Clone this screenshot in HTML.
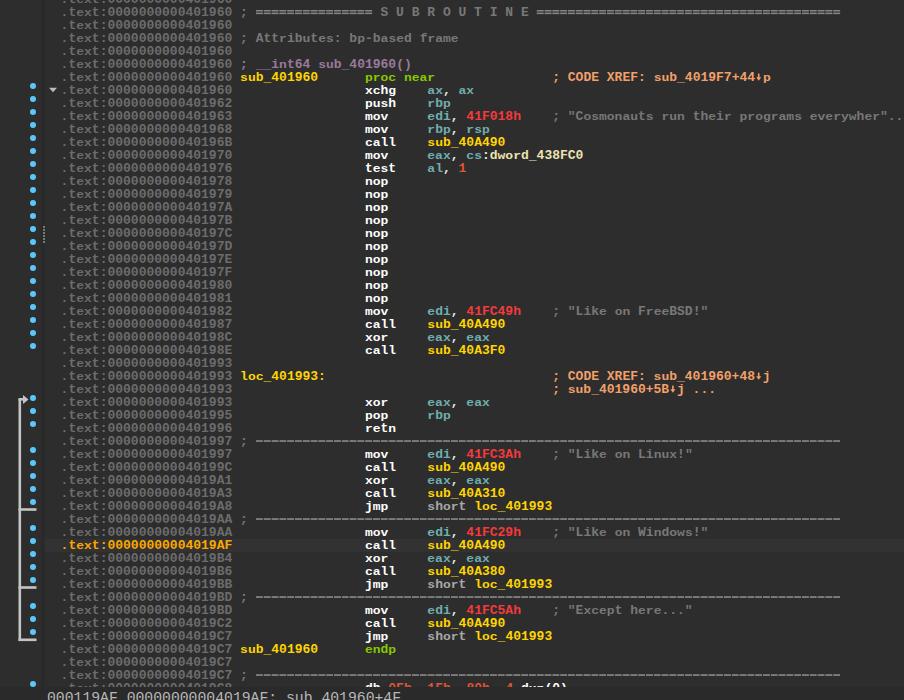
<!DOCTYPE html>
<html><head><meta charset="utf-8"><style>
html,body{margin:0;padding:0}
body{width:904px;height:700px;overflow:hidden;background:#2d2d2d;position:relative;font-family:"Liberation Mono",monospace}
.band{position:absolute;left:41px;top:0;width:4px;height:687px;background:#2a2a2a}
.code{position:absolute;left:60.6px;top:-7px;width:900px;font-size:13px;font-weight:bold;white-space:pre;color:#e8e8e8}
.l{height:13px;line-height:13px;position:relative}
.q{display:inline-block;transform:scaleY(0.86);transform-origin:0 10px;text-decoration:none}
.k{display:inline-block;transform:scaleY(0.94);transform-origin:0 10px;text-decoration:none}
.hlbar{position:absolute;left:45px;width:859px;top:539px;height:13px;background:#323232}
b{font-weight:bold}
.a{color:#6c6c6c}
.ah{color:#fca800}
.c{color:#787878}
.p{color:#9a7a9a}
.y{color:#ffd400}
.g{color:#88c800}
.x{color:#f2a06a}
.m{color:#ffffff}
.r{color:#70aeae}
.n{color:#f43a3c}
.o{color:#dd5533}
.d{color:#ece4b0}
.s{color:#a8a8a8}
.dot{position:absolute;left:29.6px;width:6.6px;height:6.6px;border-radius:50%;background:#5ac8fa}
.status{position:absolute;left:0;top:687px;width:904px;height:13px;background:#2a2a2a;overflow:hidden}
.status span{position:absolute;left:47px;top:0px;font-size:14.75px;line-height:22px;color:#b8b8b8;white-space:pre;font-family:"Liberation Mono",monospace}
svg{position:absolute;left:0;top:0}
</style></head>
<body>
<div class="band"></div>
<div class="hlbar"></div>
<svg width="60" height="700" viewBox="0 0 60 700">
<polygon points="49,87.8 57,87.8 53,92.2" fill="#bcbcbc"/>
<rect x="18.5" y="399" width="2.6" height="242" fill="#c4c4c4"/>
<rect x="18.5" y="398" width="5" height="2.6" fill="#c4c4c4"/>
<polygon points="23,395 28.5,399.5 23,404" fill="#c4c4c4"/>
<rect x="18.5" y="508.2" width="18" height="2.6" fill="#c4c4c4"/>
<rect x="18.5" y="586.2" width="18" height="2.6" fill="#c4c4c4"/>
<rect x="18.5" y="638.5" width="18" height="2.6" fill="#c4c4c4"/>
<g fill="#7a7a7a"><rect x="43" y="226" width="2" height="2"/><rect x="43" y="229" width="2" height="2"/><rect x="43" y="232" width="2" height="2"/><rect x="43" y="235" width="2" height="2"/><rect x="43" y="238" width="2" height="2"/><rect x="43" y="241" width="2" height="2"/></g>
</svg>
<i class="dot" style="top:82.6px"></i><i class="dot" style="top:95.6px"></i><i class="dot" style="top:108.6px"></i><i class="dot" style="top:121.6px"></i><i class="dot" style="top:134.6px"></i><i class="dot" style="top:147.6px"></i><i class="dot" style="top:160.6px"></i><i class="dot" style="top:173.6px"></i><i class="dot" style="top:186.6px"></i><i class="dot" style="top:199.6px"></i><i class="dot" style="top:212.6px"></i><i class="dot" style="top:225.6px"></i><i class="dot" style="top:238.6px"></i><i class="dot" style="top:251.6px"></i><i class="dot" style="top:264.6px"></i><i class="dot" style="top:277.6px"></i><i class="dot" style="top:290.6px"></i><i class="dot" style="top:303.6px"></i><i class="dot" style="top:316.6px"></i><i class="dot" style="top:329.6px"></i><i class="dot" style="top:342.6px"></i><i class="dot" style="top:394.6px"></i><i class="dot" style="top:407.6px"></i><i class="dot" style="top:420.6px"></i><i class="dot" style="top:446.6px"></i><i class="dot" style="top:459.6px"></i><i class="dot" style="top:472.6px"></i><i class="dot" style="top:485.6px"></i><i class="dot" style="top:498.6px"></i><i class="dot" style="top:524.6px"></i><i class="dot" style="top:537.6px"></i><i class="dot" style="top:550.6px"></i><i class="dot" style="top:563.6px"></i><i class="dot" style="top:576.6px"></i><i class="dot" style="top:602.6px"></i><i class="dot" style="top:615.6px"></i><i class="dot" style="top:628.6px"></i><i class="dot" style="top:680.6px"></i>
<svg class="dsh" width="904" height="700"><g fill="#f2a06a"><rect x="757.9" y="73.6" width="1.6" height="4.6"/><polygon points="756.2,77.2 761.2,77.2 758.7,80.8"/><rect x="757.9" y="372.6" width="1.6" height="4.6"/><polygon points="756.2,376.2 761.2,376.2 758.7,379.8"/><rect x="672.1" y="385.6" width="1.6" height="4.6"/><polygon points="670.4,389.2 675.4,389.2 672.9,392.8"/></g><g fill="#858585"><rect x="256.0" y="440.2" width="6.9" height="1.7"/><rect x="263.8" y="440.2" width="6.9" height="1.7"/><rect x="271.6" y="440.2" width="6.9" height="1.7"/><rect x="279.4" y="440.2" width="6.9" height="1.7"/><rect x="287.2" y="440.2" width="6.9" height="1.7"/><rect x="295.0" y="440.2" width="6.9" height="1.7"/><rect x="302.8" y="440.2" width="6.9" height="1.7"/><rect x="310.6" y="440.2" width="6.9" height="1.7"/><rect x="318.4" y="440.2" width="6.9" height="1.7"/><rect x="326.2" y="440.2" width="6.9" height="1.7"/><rect x="334.0" y="440.2" width="6.9" height="1.7"/><rect x="341.8" y="440.2" width="6.9" height="1.7"/><rect x="349.6" y="440.2" width="6.9" height="1.7"/><rect x="357.4" y="440.2" width="6.9" height="1.7"/><rect x="365.2" y="440.2" width="6.9" height="1.7"/><rect x="373.0" y="440.2" width="6.9" height="1.7"/><rect x="380.8" y="440.2" width="6.9" height="1.7"/><rect x="388.6" y="440.2" width="6.9" height="1.7"/><rect x="396.4" y="440.2" width="6.9" height="1.7"/><rect x="404.2" y="440.2" width="6.9" height="1.7"/><rect x="412.0" y="440.2" width="6.9" height="1.7"/><rect x="419.8" y="440.2" width="6.9" height="1.7"/><rect x="427.6" y="440.2" width="6.9" height="1.7"/><rect x="435.4" y="440.2" width="6.9" height="1.7"/><rect x="443.2" y="440.2" width="6.9" height="1.7"/><rect x="451.0" y="440.2" width="6.9" height="1.7"/><rect x="458.8" y="440.2" width="6.9" height="1.7"/><rect x="466.6" y="440.2" width="6.9" height="1.7"/><rect x="474.4" y="440.2" width="6.9" height="1.7"/><rect x="482.2" y="440.2" width="6.9" height="1.7"/><rect x="490.0" y="440.2" width="6.9" height="1.7"/><rect x="497.8" y="440.2" width="6.9" height="1.7"/><rect x="505.6" y="440.2" width="6.9" height="1.7"/><rect x="513.4" y="440.2" width="6.9" height="1.7"/><rect x="521.2" y="440.2" width="6.9" height="1.7"/><rect x="529.0" y="440.2" width="6.9" height="1.7"/><rect x="536.8" y="440.2" width="6.9" height="1.7"/><rect x="544.6" y="440.2" width="6.9" height="1.7"/><rect x="552.4" y="440.2" width="6.9" height="1.7"/><rect x="560.2" y="440.2" width="6.9" height="1.7"/><rect x="568.0" y="440.2" width="6.9" height="1.7"/><rect x="575.8" y="440.2" width="6.9" height="1.7"/><rect x="583.6" y="440.2" width="6.9" height="1.7"/><rect x="591.4" y="440.2" width="6.9" height="1.7"/><rect x="599.2" y="440.2" width="6.9" height="1.7"/><rect x="607.0" y="440.2" width="6.9" height="1.7"/><rect x="614.8" y="440.2" width="6.9" height="1.7"/><rect x="622.6" y="440.2" width="6.9" height="1.7"/><rect x="630.4" y="440.2" width="6.9" height="1.7"/><rect x="638.2" y="440.2" width="6.9" height="1.7"/><rect x="646.0" y="440.2" width="6.9" height="1.7"/><rect x="653.8" y="440.2" width="6.9" height="1.7"/><rect x="661.6" y="440.2" width="6.9" height="1.7"/><rect x="669.4" y="440.2" width="6.9" height="1.7"/><rect x="677.2" y="440.2" width="6.9" height="1.7"/><rect x="685.0" y="440.2" width="6.9" height="1.7"/><rect x="692.8" y="440.2" width="6.9" height="1.7"/><rect x="700.6" y="440.2" width="6.9" height="1.7"/><rect x="708.4" y="440.2" width="6.9" height="1.7"/><rect x="716.2" y="440.2" width="6.9" height="1.7"/><rect x="724.0" y="440.2" width="6.9" height="1.7"/><rect x="731.8" y="440.2" width="6.9" height="1.7"/><rect x="739.6" y="440.2" width="6.9" height="1.7"/><rect x="747.4" y="440.2" width="6.9" height="1.7"/><rect x="755.2" y="440.2" width="6.9" height="1.7"/><rect x="763.0" y="440.2" width="6.9" height="1.7"/><rect x="770.8" y="440.2" width="6.9" height="1.7"/><rect x="778.6" y="440.2" width="6.9" height="1.7"/><rect x="786.4" y="440.2" width="6.9" height="1.7"/><rect x="794.2" y="440.2" width="6.9" height="1.7"/><rect x="802.0" y="440.2" width="6.9" height="1.7"/><rect x="809.8" y="440.2" width="6.9" height="1.7"/><rect x="817.6" y="440.2" width="6.9" height="1.7"/><rect x="825.4" y="440.2" width="6.9" height="1.7"/><rect x="833.2" y="440.2" width="6.9" height="1.7"/><rect x="256.0" y="518.2" width="6.9" height="1.7"/><rect x="263.8" y="518.2" width="6.9" height="1.7"/><rect x="271.6" y="518.2" width="6.9" height="1.7"/><rect x="279.4" y="518.2" width="6.9" height="1.7"/><rect x="287.2" y="518.2" width="6.9" height="1.7"/><rect x="295.0" y="518.2" width="6.9" height="1.7"/><rect x="302.8" y="518.2" width="6.9" height="1.7"/><rect x="310.6" y="518.2" width="6.9" height="1.7"/><rect x="318.4" y="518.2" width="6.9" height="1.7"/><rect x="326.2" y="518.2" width="6.9" height="1.7"/><rect x="334.0" y="518.2" width="6.9" height="1.7"/><rect x="341.8" y="518.2" width="6.9" height="1.7"/><rect x="349.6" y="518.2" width="6.9" height="1.7"/><rect x="357.4" y="518.2" width="6.9" height="1.7"/><rect x="365.2" y="518.2" width="6.9" height="1.7"/><rect x="373.0" y="518.2" width="6.9" height="1.7"/><rect x="380.8" y="518.2" width="6.9" height="1.7"/><rect x="388.6" y="518.2" width="6.9" height="1.7"/><rect x="396.4" y="518.2" width="6.9" height="1.7"/><rect x="404.2" y="518.2" width="6.9" height="1.7"/><rect x="412.0" y="518.2" width="6.9" height="1.7"/><rect x="419.8" y="518.2" width="6.9" height="1.7"/><rect x="427.6" y="518.2" width="6.9" height="1.7"/><rect x="435.4" y="518.2" width="6.9" height="1.7"/><rect x="443.2" y="518.2" width="6.9" height="1.7"/><rect x="451.0" y="518.2" width="6.9" height="1.7"/><rect x="458.8" y="518.2" width="6.9" height="1.7"/><rect x="466.6" y="518.2" width="6.9" height="1.7"/><rect x="474.4" y="518.2" width="6.9" height="1.7"/><rect x="482.2" y="518.2" width="6.9" height="1.7"/><rect x="490.0" y="518.2" width="6.9" height="1.7"/><rect x="497.8" y="518.2" width="6.9" height="1.7"/><rect x="505.6" y="518.2" width="6.9" height="1.7"/><rect x="513.4" y="518.2" width="6.9" height="1.7"/><rect x="521.2" y="518.2" width="6.9" height="1.7"/><rect x="529.0" y="518.2" width="6.9" height="1.7"/><rect x="536.8" y="518.2" width="6.9" height="1.7"/><rect x="544.6" y="518.2" width="6.9" height="1.7"/><rect x="552.4" y="518.2" width="6.9" height="1.7"/><rect x="560.2" y="518.2" width="6.9" height="1.7"/><rect x="568.0" y="518.2" width="6.9" height="1.7"/><rect x="575.8" y="518.2" width="6.9" height="1.7"/><rect x="583.6" y="518.2" width="6.9" height="1.7"/><rect x="591.4" y="518.2" width="6.9" height="1.7"/><rect x="599.2" y="518.2" width="6.9" height="1.7"/><rect x="607.0" y="518.2" width="6.9" height="1.7"/><rect x="614.8" y="518.2" width="6.9" height="1.7"/><rect x="622.6" y="518.2" width="6.9" height="1.7"/><rect x="630.4" y="518.2" width="6.9" height="1.7"/><rect x="638.2" y="518.2" width="6.9" height="1.7"/><rect x="646.0" y="518.2" width="6.9" height="1.7"/><rect x="653.8" y="518.2" width="6.9" height="1.7"/><rect x="661.6" y="518.2" width="6.9" height="1.7"/><rect x="669.4" y="518.2" width="6.9" height="1.7"/><rect x="677.2" y="518.2" width="6.9" height="1.7"/><rect x="685.0" y="518.2" width="6.9" height="1.7"/><rect x="692.8" y="518.2" width="6.9" height="1.7"/><rect x="700.6" y="518.2" width="6.9" height="1.7"/><rect x="708.4" y="518.2" width="6.9" height="1.7"/><rect x="716.2" y="518.2" width="6.9" height="1.7"/><rect x="724.0" y="518.2" width="6.9" height="1.7"/><rect x="731.8" y="518.2" width="6.9" height="1.7"/><rect x="739.6" y="518.2" width="6.9" height="1.7"/><rect x="747.4" y="518.2" width="6.9" height="1.7"/><rect x="755.2" y="518.2" width="6.9" height="1.7"/><rect x="763.0" y="518.2" width="6.9" height="1.7"/><rect x="770.8" y="518.2" width="6.9" height="1.7"/><rect x="778.6" y="518.2" width="6.9" height="1.7"/><rect x="786.4" y="518.2" width="6.9" height="1.7"/><rect x="794.2" y="518.2" width="6.9" height="1.7"/><rect x="802.0" y="518.2" width="6.9" height="1.7"/><rect x="809.8" y="518.2" width="6.9" height="1.7"/><rect x="817.6" y="518.2" width="6.9" height="1.7"/><rect x="825.4" y="518.2" width="6.9" height="1.7"/><rect x="833.2" y="518.2" width="6.9" height="1.7"/><rect x="256.0" y="596.2" width="6.9" height="1.7"/><rect x="263.8" y="596.2" width="6.9" height="1.7"/><rect x="271.6" y="596.2" width="6.9" height="1.7"/><rect x="279.4" y="596.2" width="6.9" height="1.7"/><rect x="287.2" y="596.2" width="6.9" height="1.7"/><rect x="295.0" y="596.2" width="6.9" height="1.7"/><rect x="302.8" y="596.2" width="6.9" height="1.7"/><rect x="310.6" y="596.2" width="6.9" height="1.7"/><rect x="318.4" y="596.2" width="6.9" height="1.7"/><rect x="326.2" y="596.2" width="6.9" height="1.7"/><rect x="334.0" y="596.2" width="6.9" height="1.7"/><rect x="341.8" y="596.2" width="6.9" height="1.7"/><rect x="349.6" y="596.2" width="6.9" height="1.7"/><rect x="357.4" y="596.2" width="6.9" height="1.7"/><rect x="365.2" y="596.2" width="6.9" height="1.7"/><rect x="373.0" y="596.2" width="6.9" height="1.7"/><rect x="380.8" y="596.2" width="6.9" height="1.7"/><rect x="388.6" y="596.2" width="6.9" height="1.7"/><rect x="396.4" y="596.2" width="6.9" height="1.7"/><rect x="404.2" y="596.2" width="6.9" height="1.7"/><rect x="412.0" y="596.2" width="6.9" height="1.7"/><rect x="419.8" y="596.2" width="6.9" height="1.7"/><rect x="427.6" y="596.2" width="6.9" height="1.7"/><rect x="435.4" y="596.2" width="6.9" height="1.7"/><rect x="443.2" y="596.2" width="6.9" height="1.7"/><rect x="451.0" y="596.2" width="6.9" height="1.7"/><rect x="458.8" y="596.2" width="6.9" height="1.7"/><rect x="466.6" y="596.2" width="6.9" height="1.7"/><rect x="474.4" y="596.2" width="6.9" height="1.7"/><rect x="482.2" y="596.2" width="6.9" height="1.7"/><rect x="490.0" y="596.2" width="6.9" height="1.7"/><rect x="497.8" y="596.2" width="6.9" height="1.7"/><rect x="505.6" y="596.2" width="6.9" height="1.7"/><rect x="513.4" y="596.2" width="6.9" height="1.7"/><rect x="521.2" y="596.2" width="6.9" height="1.7"/><rect x="529.0" y="596.2" width="6.9" height="1.7"/><rect x="536.8" y="596.2" width="6.9" height="1.7"/><rect x="544.6" y="596.2" width="6.9" height="1.7"/><rect x="552.4" y="596.2" width="6.9" height="1.7"/><rect x="560.2" y="596.2" width="6.9" height="1.7"/><rect x="568.0" y="596.2" width="6.9" height="1.7"/><rect x="575.8" y="596.2" width="6.9" height="1.7"/><rect x="583.6" y="596.2" width="6.9" height="1.7"/><rect x="591.4" y="596.2" width="6.9" height="1.7"/><rect x="599.2" y="596.2" width="6.9" height="1.7"/><rect x="607.0" y="596.2" width="6.9" height="1.7"/><rect x="614.8" y="596.2" width="6.9" height="1.7"/><rect x="622.6" y="596.2" width="6.9" height="1.7"/><rect x="630.4" y="596.2" width="6.9" height="1.7"/><rect x="638.2" y="596.2" width="6.9" height="1.7"/><rect x="646.0" y="596.2" width="6.9" height="1.7"/><rect x="653.8" y="596.2" width="6.9" height="1.7"/><rect x="661.6" y="596.2" width="6.9" height="1.7"/><rect x="669.4" y="596.2" width="6.9" height="1.7"/><rect x="677.2" y="596.2" width="6.9" height="1.7"/><rect x="685.0" y="596.2" width="6.9" height="1.7"/><rect x="692.8" y="596.2" width="6.9" height="1.7"/><rect x="700.6" y="596.2" width="6.9" height="1.7"/><rect x="708.4" y="596.2" width="6.9" height="1.7"/><rect x="716.2" y="596.2" width="6.9" height="1.7"/><rect x="724.0" y="596.2" width="6.9" height="1.7"/><rect x="731.8" y="596.2" width="6.9" height="1.7"/><rect x="739.6" y="596.2" width="6.9" height="1.7"/><rect x="747.4" y="596.2" width="6.9" height="1.7"/><rect x="755.2" y="596.2" width="6.9" height="1.7"/><rect x="763.0" y="596.2" width="6.9" height="1.7"/><rect x="770.8" y="596.2" width="6.9" height="1.7"/><rect x="778.6" y="596.2" width="6.9" height="1.7"/><rect x="786.4" y="596.2" width="6.9" height="1.7"/><rect x="794.2" y="596.2" width="6.9" height="1.7"/><rect x="802.0" y="596.2" width="6.9" height="1.7"/><rect x="809.8" y="596.2" width="6.9" height="1.7"/><rect x="817.6" y="596.2" width="6.9" height="1.7"/><rect x="825.4" y="596.2" width="6.9" height="1.7"/><rect x="833.2" y="596.2" width="6.9" height="1.7"/><rect x="256.0" y="674.2" width="6.9" height="1.7"/><rect x="263.8" y="674.2" width="6.9" height="1.7"/><rect x="271.6" y="674.2" width="6.9" height="1.7"/><rect x="279.4" y="674.2" width="6.9" height="1.7"/><rect x="287.2" y="674.2" width="6.9" height="1.7"/><rect x="295.0" y="674.2" width="6.9" height="1.7"/><rect x="302.8" y="674.2" width="6.9" height="1.7"/><rect x="310.6" y="674.2" width="6.9" height="1.7"/><rect x="318.4" y="674.2" width="6.9" height="1.7"/><rect x="326.2" y="674.2" width="6.9" height="1.7"/><rect x="334.0" y="674.2" width="6.9" height="1.7"/><rect x="341.8" y="674.2" width="6.9" height="1.7"/><rect x="349.6" y="674.2" width="6.9" height="1.7"/><rect x="357.4" y="674.2" width="6.9" height="1.7"/><rect x="365.2" y="674.2" width="6.9" height="1.7"/><rect x="373.0" y="674.2" width="6.9" height="1.7"/><rect x="380.8" y="674.2" width="6.9" height="1.7"/><rect x="388.6" y="674.2" width="6.9" height="1.7"/><rect x="396.4" y="674.2" width="6.9" height="1.7"/><rect x="404.2" y="674.2" width="6.9" height="1.7"/><rect x="412.0" y="674.2" width="6.9" height="1.7"/><rect x="419.8" y="674.2" width="6.9" height="1.7"/><rect x="427.6" y="674.2" width="6.9" height="1.7"/><rect x="435.4" y="674.2" width="6.9" height="1.7"/><rect x="443.2" y="674.2" width="6.9" height="1.7"/><rect x="451.0" y="674.2" width="6.9" height="1.7"/><rect x="458.8" y="674.2" width="6.9" height="1.7"/><rect x="466.6" y="674.2" width="6.9" height="1.7"/><rect x="474.4" y="674.2" width="6.9" height="1.7"/><rect x="482.2" y="674.2" width="6.9" height="1.7"/><rect x="490.0" y="674.2" width="6.9" height="1.7"/><rect x="497.8" y="674.2" width="6.9" height="1.7"/><rect x="505.6" y="674.2" width="6.9" height="1.7"/><rect x="513.4" y="674.2" width="6.9" height="1.7"/><rect x="521.2" y="674.2" width="6.9" height="1.7"/><rect x="529.0" y="674.2" width="6.9" height="1.7"/><rect x="536.8" y="674.2" width="6.9" height="1.7"/><rect x="544.6" y="674.2" width="6.9" height="1.7"/><rect x="552.4" y="674.2" width="6.9" height="1.7"/><rect x="560.2" y="674.2" width="6.9" height="1.7"/><rect x="568.0" y="674.2" width="6.9" height="1.7"/><rect x="575.8" y="674.2" width="6.9" height="1.7"/><rect x="583.6" y="674.2" width="6.9" height="1.7"/><rect x="591.4" y="674.2" width="6.9" height="1.7"/><rect x="599.2" y="674.2" width="6.9" height="1.7"/><rect x="607.0" y="674.2" width="6.9" height="1.7"/><rect x="614.8" y="674.2" width="6.9" height="1.7"/><rect x="622.6" y="674.2" width="6.9" height="1.7"/><rect x="630.4" y="674.2" width="6.9" height="1.7"/><rect x="638.2" y="674.2" width="6.9" height="1.7"/><rect x="646.0" y="674.2" width="6.9" height="1.7"/><rect x="653.8" y="674.2" width="6.9" height="1.7"/><rect x="661.6" y="674.2" width="6.9" height="1.7"/><rect x="669.4" y="674.2" width="6.9" height="1.7"/><rect x="677.2" y="674.2" width="6.9" height="1.7"/><rect x="685.0" y="674.2" width="6.9" height="1.7"/><rect x="692.8" y="674.2" width="6.9" height="1.7"/><rect x="700.6" y="674.2" width="6.9" height="1.7"/><rect x="708.4" y="674.2" width="6.9" height="1.7"/><rect x="716.2" y="674.2" width="6.9" height="1.7"/><rect x="724.0" y="674.2" width="6.9" height="1.7"/><rect x="731.8" y="674.2" width="6.9" height="1.7"/><rect x="739.6" y="674.2" width="6.9" height="1.7"/><rect x="747.4" y="674.2" width="6.9" height="1.7"/><rect x="755.2" y="674.2" width="6.9" height="1.7"/><rect x="763.0" y="674.2" width="6.9" height="1.7"/><rect x="770.8" y="674.2" width="6.9" height="1.7"/><rect x="778.6" y="674.2" width="6.9" height="1.7"/><rect x="786.4" y="674.2" width="6.9" height="1.7"/><rect x="794.2" y="674.2" width="6.9" height="1.7"/><rect x="802.0" y="674.2" width="6.9" height="1.7"/><rect x="809.8" y="674.2" width="6.9" height="1.7"/><rect x="817.6" y="674.2" width="6.9" height="1.7"/><rect x="825.4" y="674.2" width="6.9" height="1.7"/><rect x="833.2" y="674.2" width="6.9" height="1.7"/></g><g fill="#858585"><rect x="256.0" y="10.0" width="6.9" height="4.1" fill="#4e4e4e"/><rect x="256.0" y="10.0" width="6.9" height="1.2"/><rect x="256.0" y="12.9" width="6.9" height="1.2"/><rect x="263.8" y="10.0" width="6.9" height="4.1" fill="#4e4e4e"/><rect x="263.8" y="10.0" width="6.9" height="1.2"/><rect x="263.8" y="12.9" width="6.9" height="1.2"/><rect x="271.6" y="10.0" width="6.9" height="4.1" fill="#4e4e4e"/><rect x="271.6" y="10.0" width="6.9" height="1.2"/><rect x="271.6" y="12.9" width="6.9" height="1.2"/><rect x="279.4" y="10.0" width="6.9" height="4.1" fill="#4e4e4e"/><rect x="279.4" y="10.0" width="6.9" height="1.2"/><rect x="279.4" y="12.9" width="6.9" height="1.2"/><rect x="287.2" y="10.0" width="6.9" height="4.1" fill="#4e4e4e"/><rect x="287.2" y="10.0" width="6.9" height="1.2"/><rect x="287.2" y="12.9" width="6.9" height="1.2"/><rect x="295.0" y="10.0" width="6.9" height="4.1" fill="#4e4e4e"/><rect x="295.0" y="10.0" width="6.9" height="1.2"/><rect x="295.0" y="12.9" width="6.9" height="1.2"/><rect x="302.8" y="10.0" width="6.9" height="4.1" fill="#4e4e4e"/><rect x="302.8" y="10.0" width="6.9" height="1.2"/><rect x="302.8" y="12.9" width="6.9" height="1.2"/><rect x="310.6" y="10.0" width="6.9" height="4.1" fill="#4e4e4e"/><rect x="310.6" y="10.0" width="6.9" height="1.2"/><rect x="310.6" y="12.9" width="6.9" height="1.2"/><rect x="318.4" y="10.0" width="6.9" height="4.1" fill="#4e4e4e"/><rect x="318.4" y="10.0" width="6.9" height="1.2"/><rect x="318.4" y="12.9" width="6.9" height="1.2"/><rect x="326.2" y="10.0" width="6.9" height="4.1" fill="#4e4e4e"/><rect x="326.2" y="10.0" width="6.9" height="1.2"/><rect x="326.2" y="12.9" width="6.9" height="1.2"/><rect x="334.0" y="10.0" width="6.9" height="4.1" fill="#4e4e4e"/><rect x="334.0" y="10.0" width="6.9" height="1.2"/><rect x="334.0" y="12.9" width="6.9" height="1.2"/><rect x="341.8" y="10.0" width="6.9" height="4.1" fill="#4e4e4e"/><rect x="341.8" y="10.0" width="6.9" height="1.2"/><rect x="341.8" y="12.9" width="6.9" height="1.2"/><rect x="349.6" y="10.0" width="6.9" height="4.1" fill="#4e4e4e"/><rect x="349.6" y="10.0" width="6.9" height="1.2"/><rect x="349.6" y="12.9" width="6.9" height="1.2"/><rect x="357.4" y="10.0" width="6.9" height="4.1" fill="#4e4e4e"/><rect x="357.4" y="10.0" width="6.9" height="1.2"/><rect x="357.4" y="12.9" width="6.9" height="1.2"/><rect x="365.2" y="10.0" width="6.9" height="4.1" fill="#4e4e4e"/><rect x="365.2" y="10.0" width="6.9" height="1.2"/><rect x="365.2" y="12.9" width="6.9" height="1.2"/><rect x="536.8" y="10.0" width="6.9" height="4.1" fill="#4e4e4e"/><rect x="536.8" y="10.0" width="6.9" height="1.2"/><rect x="536.8" y="12.9" width="6.9" height="1.2"/><rect x="544.6" y="10.0" width="6.9" height="4.1" fill="#4e4e4e"/><rect x="544.6" y="10.0" width="6.9" height="1.2"/><rect x="544.6" y="12.9" width="6.9" height="1.2"/><rect x="552.4" y="10.0" width="6.9" height="4.1" fill="#4e4e4e"/><rect x="552.4" y="10.0" width="6.9" height="1.2"/><rect x="552.4" y="12.9" width="6.9" height="1.2"/><rect x="560.2" y="10.0" width="6.9" height="4.1" fill="#4e4e4e"/><rect x="560.2" y="10.0" width="6.9" height="1.2"/><rect x="560.2" y="12.9" width="6.9" height="1.2"/><rect x="568.0" y="10.0" width="6.9" height="4.1" fill="#4e4e4e"/><rect x="568.0" y="10.0" width="6.9" height="1.2"/><rect x="568.0" y="12.9" width="6.9" height="1.2"/><rect x="575.8" y="10.0" width="6.9" height="4.1" fill="#4e4e4e"/><rect x="575.8" y="10.0" width="6.9" height="1.2"/><rect x="575.8" y="12.9" width="6.9" height="1.2"/><rect x="583.6" y="10.0" width="6.9" height="4.1" fill="#4e4e4e"/><rect x="583.6" y="10.0" width="6.9" height="1.2"/><rect x="583.6" y="12.9" width="6.9" height="1.2"/><rect x="591.4" y="10.0" width="6.9" height="4.1" fill="#4e4e4e"/><rect x="591.4" y="10.0" width="6.9" height="1.2"/><rect x="591.4" y="12.9" width="6.9" height="1.2"/><rect x="599.2" y="10.0" width="6.9" height="4.1" fill="#4e4e4e"/><rect x="599.2" y="10.0" width="6.9" height="1.2"/><rect x="599.2" y="12.9" width="6.9" height="1.2"/><rect x="607.0" y="10.0" width="6.9" height="4.1" fill="#4e4e4e"/><rect x="607.0" y="10.0" width="6.9" height="1.2"/><rect x="607.0" y="12.9" width="6.9" height="1.2"/><rect x="614.8" y="10.0" width="6.9" height="4.1" fill="#4e4e4e"/><rect x="614.8" y="10.0" width="6.9" height="1.2"/><rect x="614.8" y="12.9" width="6.9" height="1.2"/><rect x="622.6" y="10.0" width="6.9" height="4.1" fill="#4e4e4e"/><rect x="622.6" y="10.0" width="6.9" height="1.2"/><rect x="622.6" y="12.9" width="6.9" height="1.2"/><rect x="630.4" y="10.0" width="6.9" height="4.1" fill="#4e4e4e"/><rect x="630.4" y="10.0" width="6.9" height="1.2"/><rect x="630.4" y="12.9" width="6.9" height="1.2"/><rect x="638.2" y="10.0" width="6.9" height="4.1" fill="#4e4e4e"/><rect x="638.2" y="10.0" width="6.9" height="1.2"/><rect x="638.2" y="12.9" width="6.9" height="1.2"/><rect x="646.0" y="10.0" width="6.9" height="4.1" fill="#4e4e4e"/><rect x="646.0" y="10.0" width="6.9" height="1.2"/><rect x="646.0" y="12.9" width="6.9" height="1.2"/><rect x="653.8" y="10.0" width="6.9" height="4.1" fill="#4e4e4e"/><rect x="653.8" y="10.0" width="6.9" height="1.2"/><rect x="653.8" y="12.9" width="6.9" height="1.2"/><rect x="661.6" y="10.0" width="6.9" height="4.1" fill="#4e4e4e"/><rect x="661.6" y="10.0" width="6.9" height="1.2"/><rect x="661.6" y="12.9" width="6.9" height="1.2"/><rect x="669.4" y="10.0" width="6.9" height="4.1" fill="#4e4e4e"/><rect x="669.4" y="10.0" width="6.9" height="1.2"/><rect x="669.4" y="12.9" width="6.9" height="1.2"/><rect x="677.2" y="10.0" width="6.9" height="4.1" fill="#4e4e4e"/><rect x="677.2" y="10.0" width="6.9" height="1.2"/><rect x="677.2" y="12.9" width="6.9" height="1.2"/><rect x="685.0" y="10.0" width="6.9" height="4.1" fill="#4e4e4e"/><rect x="685.0" y="10.0" width="6.9" height="1.2"/><rect x="685.0" y="12.9" width="6.9" height="1.2"/><rect x="692.8" y="10.0" width="6.9" height="4.1" fill="#4e4e4e"/><rect x="692.8" y="10.0" width="6.9" height="1.2"/><rect x="692.8" y="12.9" width="6.9" height="1.2"/><rect x="700.6" y="10.0" width="6.9" height="4.1" fill="#4e4e4e"/><rect x="700.6" y="10.0" width="6.9" height="1.2"/><rect x="700.6" y="12.9" width="6.9" height="1.2"/><rect x="708.4" y="10.0" width="6.9" height="4.1" fill="#4e4e4e"/><rect x="708.4" y="10.0" width="6.9" height="1.2"/><rect x="708.4" y="12.9" width="6.9" height="1.2"/><rect x="716.2" y="10.0" width="6.9" height="4.1" fill="#4e4e4e"/><rect x="716.2" y="10.0" width="6.9" height="1.2"/><rect x="716.2" y="12.9" width="6.9" height="1.2"/><rect x="724.0" y="10.0" width="6.9" height="4.1" fill="#4e4e4e"/><rect x="724.0" y="10.0" width="6.9" height="1.2"/><rect x="724.0" y="12.9" width="6.9" height="1.2"/><rect x="731.8" y="10.0" width="6.9" height="4.1" fill="#4e4e4e"/><rect x="731.8" y="10.0" width="6.9" height="1.2"/><rect x="731.8" y="12.9" width="6.9" height="1.2"/><rect x="739.6" y="10.0" width="6.9" height="4.1" fill="#4e4e4e"/><rect x="739.6" y="10.0" width="6.9" height="1.2"/><rect x="739.6" y="12.9" width="6.9" height="1.2"/><rect x="747.4" y="10.0" width="6.9" height="4.1" fill="#4e4e4e"/><rect x="747.4" y="10.0" width="6.9" height="1.2"/><rect x="747.4" y="12.9" width="6.9" height="1.2"/><rect x="755.2" y="10.0" width="6.9" height="4.1" fill="#4e4e4e"/><rect x="755.2" y="10.0" width="6.9" height="1.2"/><rect x="755.2" y="12.9" width="6.9" height="1.2"/><rect x="763.0" y="10.0" width="6.9" height="4.1" fill="#4e4e4e"/><rect x="763.0" y="10.0" width="6.9" height="1.2"/><rect x="763.0" y="12.9" width="6.9" height="1.2"/><rect x="770.8" y="10.0" width="6.9" height="4.1" fill="#4e4e4e"/><rect x="770.8" y="10.0" width="6.9" height="1.2"/><rect x="770.8" y="12.9" width="6.9" height="1.2"/><rect x="778.6" y="10.0" width="6.9" height="4.1" fill="#4e4e4e"/><rect x="778.6" y="10.0" width="6.9" height="1.2"/><rect x="778.6" y="12.9" width="6.9" height="1.2"/><rect x="786.4" y="10.0" width="6.9" height="4.1" fill="#4e4e4e"/><rect x="786.4" y="10.0" width="6.9" height="1.2"/><rect x="786.4" y="12.9" width="6.9" height="1.2"/><rect x="794.2" y="10.0" width="6.9" height="4.1" fill="#4e4e4e"/><rect x="794.2" y="10.0" width="6.9" height="1.2"/><rect x="794.2" y="12.9" width="6.9" height="1.2"/><rect x="802.0" y="10.0" width="6.9" height="4.1" fill="#4e4e4e"/><rect x="802.0" y="10.0" width="6.9" height="1.2"/><rect x="802.0" y="12.9" width="6.9" height="1.2"/><rect x="809.8" y="10.0" width="6.9" height="4.1" fill="#4e4e4e"/><rect x="809.8" y="10.0" width="6.9" height="1.2"/><rect x="809.8" y="12.9" width="6.9" height="1.2"/><rect x="817.6" y="10.0" width="6.9" height="4.1" fill="#4e4e4e"/><rect x="817.6" y="10.0" width="6.9" height="1.2"/><rect x="817.6" y="12.9" width="6.9" height="1.2"/><rect x="825.4" y="10.0" width="6.9" height="4.1" fill="#4e4e4e"/><rect x="825.4" y="10.0" width="6.9" height="1.2"/><rect x="825.4" y="12.9" width="6.9" height="1.2"/><rect x="833.2" y="10.0" width="6.9" height="4.1" fill="#4e4e4e"/><rect x="833.2" y="10.0" width="6.9" height="1.2"/><rect x="833.2" y="12.9" width="6.9" height="1.2"/></g></svg>
<div class="code"><div class="l"><b class="a">.<u class="k">t</u><u class="q">ex</u><u class="k">t</u>:0000000000401960</b></div><div class="l"><b class="a">.<u class="k">t</u><u class="q">ex</u><u class="k">t</u>:0000000000401960</b><b class="c"> ;                 S U B R O U T I N E                                        </b></div><div class="l"><b class="a">.<u class="k">t</u><u class="q">ex</u><u class="k">t</u>:0000000000401960</b></div><div class="l"><b class="a">.<u class="k">t</u><u class="q">ex</u><u class="k">t</u>:0000000000401960</b><b class="c"> ; A<u class="k">tt</u><u class="q">r</u><u class="k">ib</u><u class="q">u</u><u class="k">t</u><u class="q">es</u>: <u class="k">b</u><u class="q">p</u>-<u class="k">b</u><u class="q">ase</u><u class="k">d</u> <u class="k">f</u><u class="q">rame</u></b></div><div class="l"><b class="a">.<u class="k">t</u><u class="q">ex</u><u class="k">t</u>:0000000000401960</b></div><div class="l"><b class="a">.<u class="k">t</u><u class="q">ex</u><u class="k">t</u>:0000000000401960</b><b class="p"> ; __<u class="k">i</u><u class="q">n</u><u class="k">t</u>64 <u class="q">su</u><u class="k">b</u>_401960()</b></div><div class="l"><b class="a">.<u class="k">t</u><u class="q">ex</u><u class="k">t</u>:0000000000401960</b> <b class="y"><u class="q">su</u><u class="k">b</u>_401960</b>      <b class="g"><u class="q">proc</u> <u class="q">near</u></b>               <b class="x">; CODE XREF: <u class="q">su</u><u class="k">b</u>_4019F7+44 <u class="q">p</u></b></div><div class="l"><b class="a">.<u class="k">t</u><u class="q">ex</u><u class="k">t</u>:0000000000401960</b>                 <b class="m"><u class="q">xc</u><u class="k">h</u><u class="q">g</u></b>    <b class="r"><u class="q">ax</u></b>, <b class="r"><u class="q">ax</u></b></div><div class="l"><b class="a">.<u class="k">t</u><u class="q">ex</u><u class="k">t</u>:0000000000401962</b>                 <b class="m"><u class="q">pus</u><u class="k">h</u></b>    <b class="r"><u class="q">r</u><u class="k">b</u><u class="q">p</u></b></div><div class="l"><b class="a">.<u class="k">t</u><u class="q">ex</u><u class="k">t</u>:0000000000401963</b>                 <b class="m"><u class="q">mov</u></b>     <b class="r"><u class="q">e</u><u class="k">di</u></b>, <b class="n">41F018<u class="k">h</u></b>    <b class="c">; "C<u class="q">osmonau</u><u class="k">t</u><u class="q">s</u> <u class="q">run</u> <u class="k">th</u><u class="q">e</u><u class="k">i</u><u class="q">r</u> <u class="q">programs</u> <u class="q">everyw</u><u class="k">h</u><u class="q">er</u>"...</b></div><div class="l"><b class="a">.<u class="k">t</u><u class="q">ex</u><u class="k">t</u>:0000000000401968</b>                 <b class="m"><u class="q">mov</u></b>     <b class="r"><u class="q">r</u><u class="k">b</u><u class="q">p</u></b>, <b class="r"><u class="q">rsp</u></b></div><div class="l"><b class="a">.<u class="k">t</u><u class="q">ex</u><u class="k">t</u>:000000000040196B</b>                 <b class="m"><u class="q">ca</u><u class="k">ll</u></b>    <b class="y"><u class="q">su</u><u class="k">b</u>_40A490</b></div><div class="l"><b class="a">.<u class="k">t</u><u class="q">ex</u><u class="k">t</u>:0000000000401970</b>                 <b class="m"><u class="q">mov</u></b>     <b class="r"><u class="q">eax</u></b>, <b class="r"><u class="q">cs</u></b>:<b class="d"><u class="k">d</u><u class="q">wor</u><u class="k">d</u>_438FC0</b></div><div class="l"><b class="a">.<u class="k">t</u><u class="q">ex</u><u class="k">t</u>:0000000000401976</b>                 <b class="m"><u class="k">t</u><u class="q">es</u><u class="k">t</u></b>    <b class="r"><u class="q">a</u><u class="k">l</u></b>, <b class="o">1</b></div><div class="l"><b class="a">.<u class="k">t</u><u class="q">ex</u><u class="k">t</u>:0000000000401978</b>                 <b class="m"><u class="q">nop</u></b></div><div class="l"><b class="a">.<u class="k">t</u><u class="q">ex</u><u class="k">t</u>:0000000000401979</b>                 <b class="m"><u class="q">nop</u></b></div><div class="l"><b class="a">.<u class="k">t</u><u class="q">ex</u><u class="k">t</u>:000000000040197A</b>                 <b class="m"><u class="q">nop</u></b></div><div class="l"><b class="a">.<u class="k">t</u><u class="q">ex</u><u class="k">t</u>:000000000040197B</b>                 <b class="m"><u class="q">nop</u></b></div><div class="l"><b class="a">.<u class="k">t</u><u class="q">ex</u><u class="k">t</u>:000000000040197C</b>                 <b class="m"><u class="q">nop</u></b></div><div class="l"><b class="a">.<u class="k">t</u><u class="q">ex</u><u class="k">t</u>:000000000040197D</b>                 <b class="m"><u class="q">nop</u></b></div><div class="l"><b class="a">.<u class="k">t</u><u class="q">ex</u><u class="k">t</u>:000000000040197E</b>                 <b class="m"><u class="q">nop</u></b></div><div class="l"><b class="a">.<u class="k">t</u><u class="q">ex</u><u class="k">t</u>:000000000040197F</b>                 <b class="m"><u class="q">nop</u></b></div><div class="l"><b class="a">.<u class="k">t</u><u class="q">ex</u><u class="k">t</u>:0000000000401980</b>                 <b class="m"><u class="q">nop</u></b></div><div class="l"><b class="a">.<u class="k">t</u><u class="q">ex</u><u class="k">t</u>:0000000000401981</b>                 <b class="m"><u class="q">nop</u></b></div><div class="l"><b class="a">.<u class="k">t</u><u class="q">ex</u><u class="k">t</u>:0000000000401982</b>                 <b class="m"><u class="q">mov</u></b>     <b class="r"><u class="q">e</u><u class="k">di</u></b>, <b class="n">41FC49<u class="k">h</u></b>    <b class="c">; "L<u class="k">ik</u><u class="q">e</u> <u class="q">on</u> F<u class="q">ree</u>BSD!"</b></div><div class="l"><b class="a">.<u class="k">t</u><u class="q">ex</u><u class="k">t</u>:0000000000401987</b>                 <b class="m"><u class="q">ca</u><u class="k">ll</u></b>    <b class="y"><u class="q">su</u><u class="k">b</u>_40A490</b></div><div class="l"><b class="a">.<u class="k">t</u><u class="q">ex</u><u class="k">t</u>:000000000040198C</b>                 <b class="m"><u class="q">xor</u></b>     <b class="r"><u class="q">eax</u></b>, <b class="r"><u class="q">eax</u></b></div><div class="l"><b class="a">.<u class="k">t</u><u class="q">ex</u><u class="k">t</u>:000000000040198E</b>                 <b class="m"><u class="q">ca</u><u class="k">ll</u></b>    <b class="y"><u class="q">su</u><u class="k">b</u>_40A3F0</b></div><div class="l"><b class="a">.<u class="k">t</u><u class="q">ex</u><u class="k">t</u>:0000000000401993</b></div><div class="l"><b class="a">.<u class="k">t</u><u class="q">ex</u><u class="k">t</u>:0000000000401993</b> <b class="y"><u class="k">l</u><u class="q">oc</u>_401993:</b>                             <b class="x">; CODE XREF: <u class="q">su</u><u class="k">b</u>_401960+48 <u class="k">j</u></b></div><div class="l"><b class="a">.<u class="k">t</u><u class="q">ex</u><u class="k">t</u>:0000000000401993</b>                                         <b class="x">; <u class="q">su</u><u class="k">b</u>_401960+5B <u class="k">j</u> ...</b></div><div class="l"><b class="a">.<u class="k">t</u><u class="q">ex</u><u class="k">t</u>:0000000000401993</b>                 <b class="m"><u class="q">xor</u></b>     <b class="r"><u class="q">eax</u></b>, <b class="r"><u class="q">eax</u></b></div><div class="l"><b class="a">.<u class="k">t</u><u class="q">ex</u><u class="k">t</u>:0000000000401995</b>                 <b class="m"><u class="q">pop</u></b>     <b class="r"><u class="q">r</u><u class="k">b</u><u class="q">p</u></b></div><div class="l"><b class="a">.<u class="k">t</u><u class="q">ex</u><u class="k">t</u>:0000000000401996</b>                 <b class="m"><u class="q">re</u><u class="k">t</u><u class="q">n</u></b></div><div class="l"><b class="a">.<u class="k">t</u><u class="q">ex</u><u class="k">t</u>:0000000000401997</b><b class="c"> ;                                                                            </b></div><div class="l"><b class="a">.<u class="k">t</u><u class="q">ex</u><u class="k">t</u>:0000000000401997</b>                 <b class="m"><u class="q">mov</u></b>     <b class="r"><u class="q">e</u><u class="k">di</u></b>, <b class="n">41FC3A<u class="k">h</u></b>    <b class="c">; "L<u class="k">ik</u><u class="q">e</u> <u class="q">on</u> L<u class="k">i</u><u class="q">nux</u>!"</b></div><div class="l"><b class="a">.<u class="k">t</u><u class="q">ex</u><u class="k">t</u>:000000000040199C</b>                 <b class="m"><u class="q">ca</u><u class="k">ll</u></b>    <b class="y"><u class="q">su</u><u class="k">b</u>_40A490</b></div><div class="l"><b class="a">.<u class="k">t</u><u class="q">ex</u><u class="k">t</u>:00000000004019A1</b>                 <b class="m"><u class="q">xor</u></b>     <b class="r"><u class="q">eax</u></b>, <b class="r"><u class="q">eax</u></b></div><div class="l"><b class="a">.<u class="k">t</u><u class="q">ex</u><u class="k">t</u>:00000000004019A3</b>                 <b class="m"><u class="q">ca</u><u class="k">ll</u></b>    <b class="y"><u class="q">su</u><u class="k">b</u>_40A310</b></div><div class="l"><b class="a">.<u class="k">t</u><u class="q">ex</u><u class="k">t</u>:00000000004019A8</b>                 <b class="m"><u class="k">j</u><u class="q">mp</u></b>     <b class="s"><u class="q">s</u><u class="k">h</u><u class="q">or</u><u class="k">t</u> </b><b class="y"><u class="k">l</u><u class="q">oc</u>_401993</b></div><div class="l"><b class="a">.<u class="k">t</u><u class="q">ex</u><u class="k">t</u>:00000000004019AA</b><b class="c"> ;                                                                            </b></div><div class="l"><b class="a">.<u class="k">t</u><u class="q">ex</u><u class="k">t</u>:00000000004019AA</b>                 <b class="m"><u class="q">mov</u></b>     <b class="r"><u class="q">e</u><u class="k">di</u></b>, <b class="n">41FC29<u class="k">h</u></b>    <b class="c">; "L<u class="k">ik</u><u class="q">e</u> <u class="q">on</u> W<u class="k">i</u><u class="q">n</u><u class="k">d</u><u class="q">ows</u>!"</b></div><div class="l hl"><b class="ah">.<u class="k">t</u><u class="q">ex</u><u class="k">t</u>:00000000004019AF</b>                 <b class="m"><u class="q">ca</u><u class="k">ll</u></b>    <b class="y"><u class="q">su</u><u class="k">b</u>_40A490</b></div><div class="l"><b class="a">.<u class="k">t</u><u class="q">ex</u><u class="k">t</u>:00000000004019B4</b>                 <b class="m"><u class="q">xor</u></b>     <b class="r"><u class="q">eax</u></b>, <b class="r"><u class="q">eax</u></b></div><div class="l"><b class="a">.<u class="k">t</u><u class="q">ex</u><u class="k">t</u>:00000000004019B6</b>                 <b class="m"><u class="q">ca</u><u class="k">ll</u></b>    <b class="y"><u class="q">su</u><u class="k">b</u>_40A380</b></div><div class="l"><b class="a">.<u class="k">t</u><u class="q">ex</u><u class="k">t</u>:00000000004019BB</b>                 <b class="m"><u class="k">j</u><u class="q">mp</u></b>     <b class="s"><u class="q">s</u><u class="k">h</u><u class="q">or</u><u class="k">t</u> </b><b class="y"><u class="k">l</u><u class="q">oc</u>_401993</b></div><div class="l"><b class="a">.<u class="k">t</u><u class="q">ex</u><u class="k">t</u>:00000000004019BD</b><b class="c"> ;                                                                            </b></div><div class="l"><b class="a">.<u class="k">t</u><u class="q">ex</u><u class="k">t</u>:00000000004019BD</b>                 <b class="m"><u class="q">mov</u></b>     <b class="r"><u class="q">e</u><u class="k">di</u></b>, <b class="n">41FC5A<u class="k">h</u></b>    <b class="c">; "E<u class="q">xcep</u><u class="k">t</u> <u class="k">h</u><u class="q">ere</u>..."</b></div><div class="l"><b class="a">.<u class="k">t</u><u class="q">ex</u><u class="k">t</u>:00000000004019C2</b>                 <b class="m"><u class="q">ca</u><u class="k">ll</u></b>    <b class="y"><u class="q">su</u><u class="k">b</u>_40A490</b></div><div class="l"><b class="a">.<u class="k">t</u><u class="q">ex</u><u class="k">t</u>:00000000004019C7</b>                 <b class="m"><u class="k">j</u><u class="q">mp</u></b>     <b class="s"><u class="q">s</u><u class="k">h</u><u class="q">or</u><u class="k">t</u> </b><b class="y"><u class="k">l</u><u class="q">oc</u>_401993</b></div><div class="l"><b class="a">.<u class="k">t</u><u class="q">ex</u><u class="k">t</u>:00000000004019C7</b> <b class="y"><u class="q">su</u><u class="k">b</u>_401960</b>      <b class="g"><u class="q">en</u><u class="k">d</u><u class="q">p</u></b></div><div class="l"><b class="a">.<u class="k">t</u><u class="q">ex</u><u class="k">t</u>:00000000004019C7</b></div><div class="l"><b class="a">.<u class="k">t</u><u class="q">ex</u><u class="k">t</u>:00000000004019C7</b><b class="c"> ;                                                                            </b></div><div class="l"><b class="a">.<u class="k">t</u><u class="q">ex</u><u class="k">t</u>:00000000004019C8</b>                 <b class="m"><u class="k">db</u></b> <b class="o">0F<u class="k">h</u></b>, <b class="o">1F<u class="k">h</u></b>, <b class="o">80<u class="k">h</u></b>, <b class="o">4</b> <b class="m"><u class="k">d</u><u class="q">up</u></b><b class="m">(0)</b></div></div>
<div class="status"><span>000119AF 00000000004019AF: sub_401960+4F</span></div>
</body></html>
